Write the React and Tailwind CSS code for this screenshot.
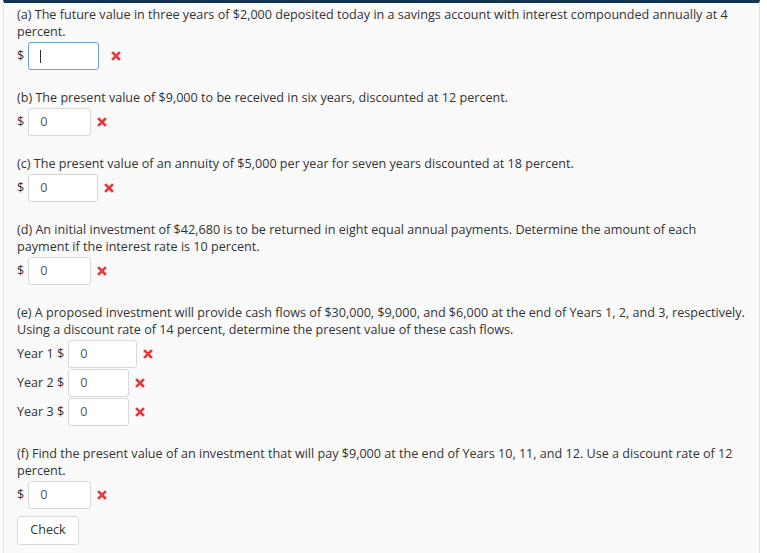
const font = { fontFamily: "'Open Sans', 'Liberation Sans', sans-serif" };

function Cross() {
  return (
    <svg width="10" height="10" viewBox="0 0 10 10" className="shrink-0">
      <path d="M2 2 L8 8 M8 2 L2 8" stroke="#e5383b" strokeWidth="2.6" strokeLinecap="square" />
    </svg>
  );
}

function Field({ label, value, width, focused, gap }) {
  return (
    <div className="flex items-center h-[28px]">
      <span className="mr-[4px]">{label}</span>
      <div
        className={
          "h-[28px] rounded-[3px] bg-white flex items-center pl-[11px] text-[#555] " +
          (focused ? "border border-[#6a9fd4]" : "border border-[#d8d8d8]")
        }
        style={{ width }}
      >
        {focused ? <span className="w-px h-[13px] bg-[#333]" /> : value}
      </div>
      <div style={{ marginLeft: gap }}>
        <Cross />
      </div>
    </div>
  );
}

function Question({ text, children }) {
  return (
    <div className="mb-[19px]">
      <p className="leading-[17px]">{text}</p>
      <div className="mt-[2px] flex flex-col gap-[1px]">{children}</div>
    </div>
  );
}

export default function App() {
  return (
    <div className="w-[767px] h-[553px] bg-white overflow-hidden" style={font}>
      <div className="ml-[3px] w-[757px] h-full bg-[#fafafa] border-l border-r border-[#e2e2e2] border-t-[3px] border-t-[#13334f] text-[12.6px] text-[#333] pl-[13px] pr-[10px] pt-[3px]">
        <Question text="(a) The future value in three years of $2,000 deposited today in a savings account with interest compounded annually at 4 percent.">
          <Field label="$" width={71} focused gap={12} />
        </Question>
        <Question text="(b) The present value of $9,000 to be received in six years, discounted at 12 percent.">
          <Field label="$" value="0" width={63} gap={6} />
        </Question>
        <Question text="(c) The present value of an annuity of $5,000 per year for seven years discounted at 18 percent.">
          <Field label="$" value="0" width={70} gap={6} />
        </Question>
        <Question text="(d) An initial investment of $42,680 is to be returned in eight equal annual payments. Determine the amount of each payment if the interest rate is 10 percent.">
          <Field label="$" value="0" width={63} gap={6} />
        </Question>
        <Question text="(e) A proposed investment will provide cash flows of $30,000, $9,000, and $6,000 at the end of Years 1, 2, and 3, respectively. Using a discount rate of 14 percent, determine the present value of these cash flows.">
          <Field label="Year 1 $" value="0" width={69} gap={6} />
          <Field label="Year 2 $" value="0" width={61} gap={6} />
          <Field label="Year 3 $" value="0" width={61} gap={6} />
        </Question>
        <div>
          <p className="leading-[17px]">
            (f) Find the present value of an investment that will pay $9,000 at the end of Years 10, 11, and 12. Use a discount rate of 12 percent.
          </p>
          <div className="mt-[2px]">
            <Field label="$" value="0" width={63} gap={6} />
          </div>
          <button className="mt-[7px] h-[29px] w-[62px] bg-white border border-[#d8d8d8] rounded-[3px] text-[#333]">
            Check
          </button>
        </div>
      </div>
    </div>
  );
}
